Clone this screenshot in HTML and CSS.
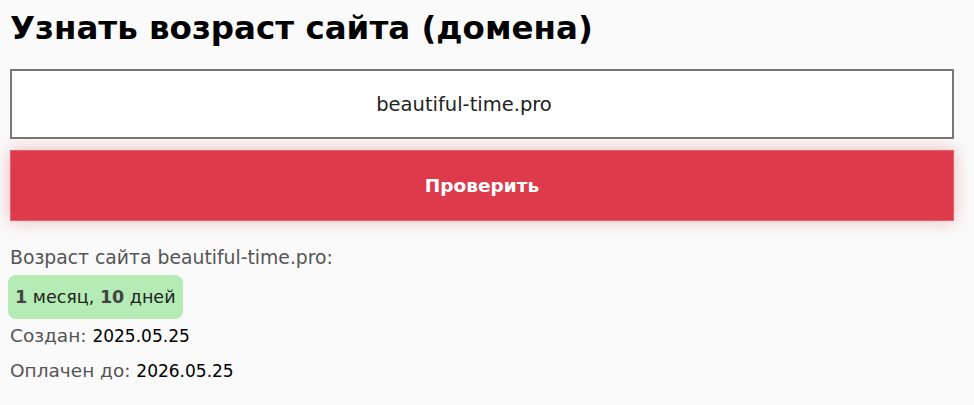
FILE: index.html
```html
<!DOCTYPE html>
<html lang="ru">
<head>
    <meta charset="UTF-8">
    <meta name="viewport" content="width=device-width, initial-scale=1.0">
    <title>Узнать возраст сайта</title>
    <link rel="stylesheet" href="styles.css">
</head>
<body>
    <div class="container">
        <h1>Узнать возраст сайта (домена)</h1>
        <input type="text" class="domain-input" value="beautiful-time.pro">
        <button class="btn">Проверить</button>
        <div class="result">
            <p class="result-title">Возраст сайта beautiful-time.pro:</p>
            <div class="age-badge"><b>1</b> месяц, <b>10</b> дней</div>
            <p class="result-row">Создан: <span>2025.05.25</span></p>
            <p class="result-row">Оплачен до: <span>2026.05.25</span></p>
        </div>
    </div>
</body>
</html>
```

FILE: styles.css
```css
body {
    font-family: "DejaVu Sans", sans-serif;
    background-color: #fafafa;
    color: #555555;
    margin: 0;
}
.container {
    width: 944px;
    padding: 0 10px;
}
h1 {
    font-size: 32.5px;
    color: #000;
    margin: 6px 0 19px 0;
    line-height: 44px;
}
.domain-input {
    display: block;
    box-sizing: border-box;
    width: 100%;
    height: 70px;
    border: 2px solid #777;
    background: #fff;
    text-align: center;
    padding: 0 36px 0 0;
    font-family: inherit;
    font-size: 19.5px;
    color: #222;
    margin: 0;
}
.btn {
    display: block;
    width: 100%;
    height: 71px;
    margin-top: 11px;
    border: 1px solid #e5606b;
    background: #dd3b4b;
    color: #fff;
    font-family: inherit;
    font-size: 18.5px;
    font-weight: bold;
    box-shadow: 0 0 16px rgba(221, 59, 75, 0.35);
    cursor: pointer;
}
.result {
    margin-top: 25px;
}
.result-title {
    font-size: 18.8px;
    line-height: 24px;
    margin: 0 0 5px 0;
}
.age-badge {
    display: inline-block;
    background: #b5ecb5;
    border-radius: 8px;
    padding: 0 7px;
    height: 44px;
    line-height: 44px;
    margin-left: -2px;
    font-size: 17.5px;
    color: #222;
}
.age-badge b {
    color: #444;
}
.result-row {
    font-size: 18.5px;
    margin: 1px 0 0 0;
    line-height: 31px;
}
.result-row + .result-row {
    margin-top: 3px;
}
.result-row span {
    font-size: 17px;
    color: #000;
}
```
